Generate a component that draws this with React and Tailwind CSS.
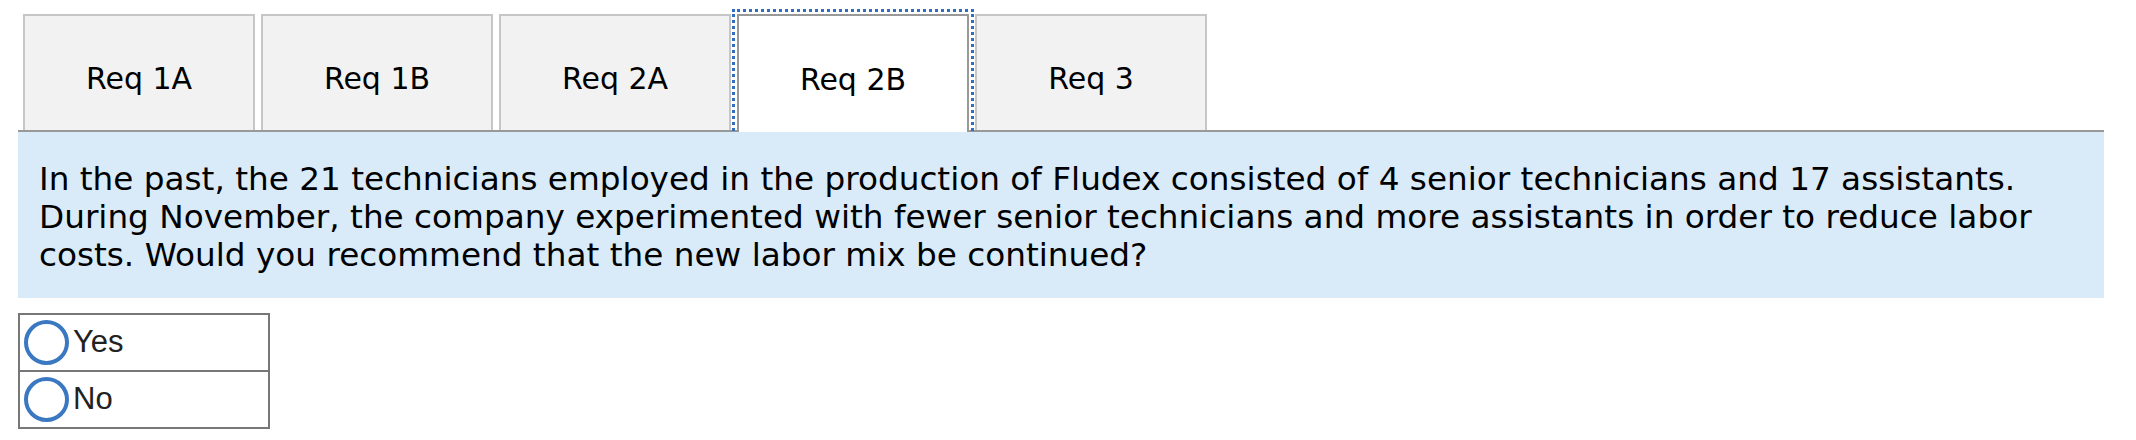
import { useState } from "react";

const tabs = ["Req 1A", "Req 1B", "Req 2A", "Req 2B", "Req 3"];

const RadioRow = ({ label, last }) => (
  <label
    className={`flex items-center pl-[4px] gap-[4px] cursor-pointer ${
      last ? "h-[55px]" : "h-[57px] border-b-2 border-[#777]"
    }`}
  >
    <span className="w-[45px] h-[45px] rounded-full border-[4px] border-[#3a78c2] bg-white" />
    <span className="text-[31px] text-[#222] font-['Liberation_Sans',Arial,sans-serif]">
      {label}
    </span>
  </label>
);

export default function App() {
  const [active, setActive] = useState(3);

  return (
    <div className="bg-white w-[2136px] h-[440px] pt-[14px] font-['DejaVu_Sans',Verdana,sans-serif]">
      <div className="ml-[18px] w-[2086px]">
        {/* Tabs */}
        <div className="flex items-end gap-[6px] pl-[5px] h-[118px] border-b-2 border-[#999]">
          {tabs.map((tab, i) =>
            i === active ? (
              <button
                key={tab}
                onClick={() => setActive(i)}
                className="relative z-10 -mb-[2px] w-[232px] h-[118px] pt-[11px] flex items-center justify-center bg-white border-2 border-b-0 border-[#999] outline-[3px] outline-dotted outline-[#2f6fc0] outline-offset-[2px] text-[30px] text-black"
              >
                {tab}
              </button>
            ) : (
              <button
                key={tab}
                onClick={() => setActive(i)}
                className="w-[232px] h-[116px] pt-[11px] flex items-center justify-center bg-[#f2f2f2] border-2 border-b-0 border-[#c6c6c6] text-[30px] text-black"
              >
                {tab}
              </button>
            )
          )}
        </div>

        {/* Question */}
        <div className="relative z-20 bg-[#d9ebf9] pt-[28px] pb-[24px] pl-[21px] pr-[25px]">
          <p className="text-[32.7px] leading-[38px] text-black">
            In the past, the 21 technicians employed in the production of Fludex
            consisted of 4 senior technicians and 17 assistants. During November,
            the company experimented with fewer senior technicians and more
            assistants in order to reduce labor costs. Would you recommend that
            the new labor mix be continued?
          </p>
        </div>

        {/* Answers */}
        <div className="mt-[15px] w-[252px] border-2 border-[#777]">
          <RadioRow label="Yes" />
          <RadioRow label="No" last />
        </div>
      </div>
    </div>
  );
}
